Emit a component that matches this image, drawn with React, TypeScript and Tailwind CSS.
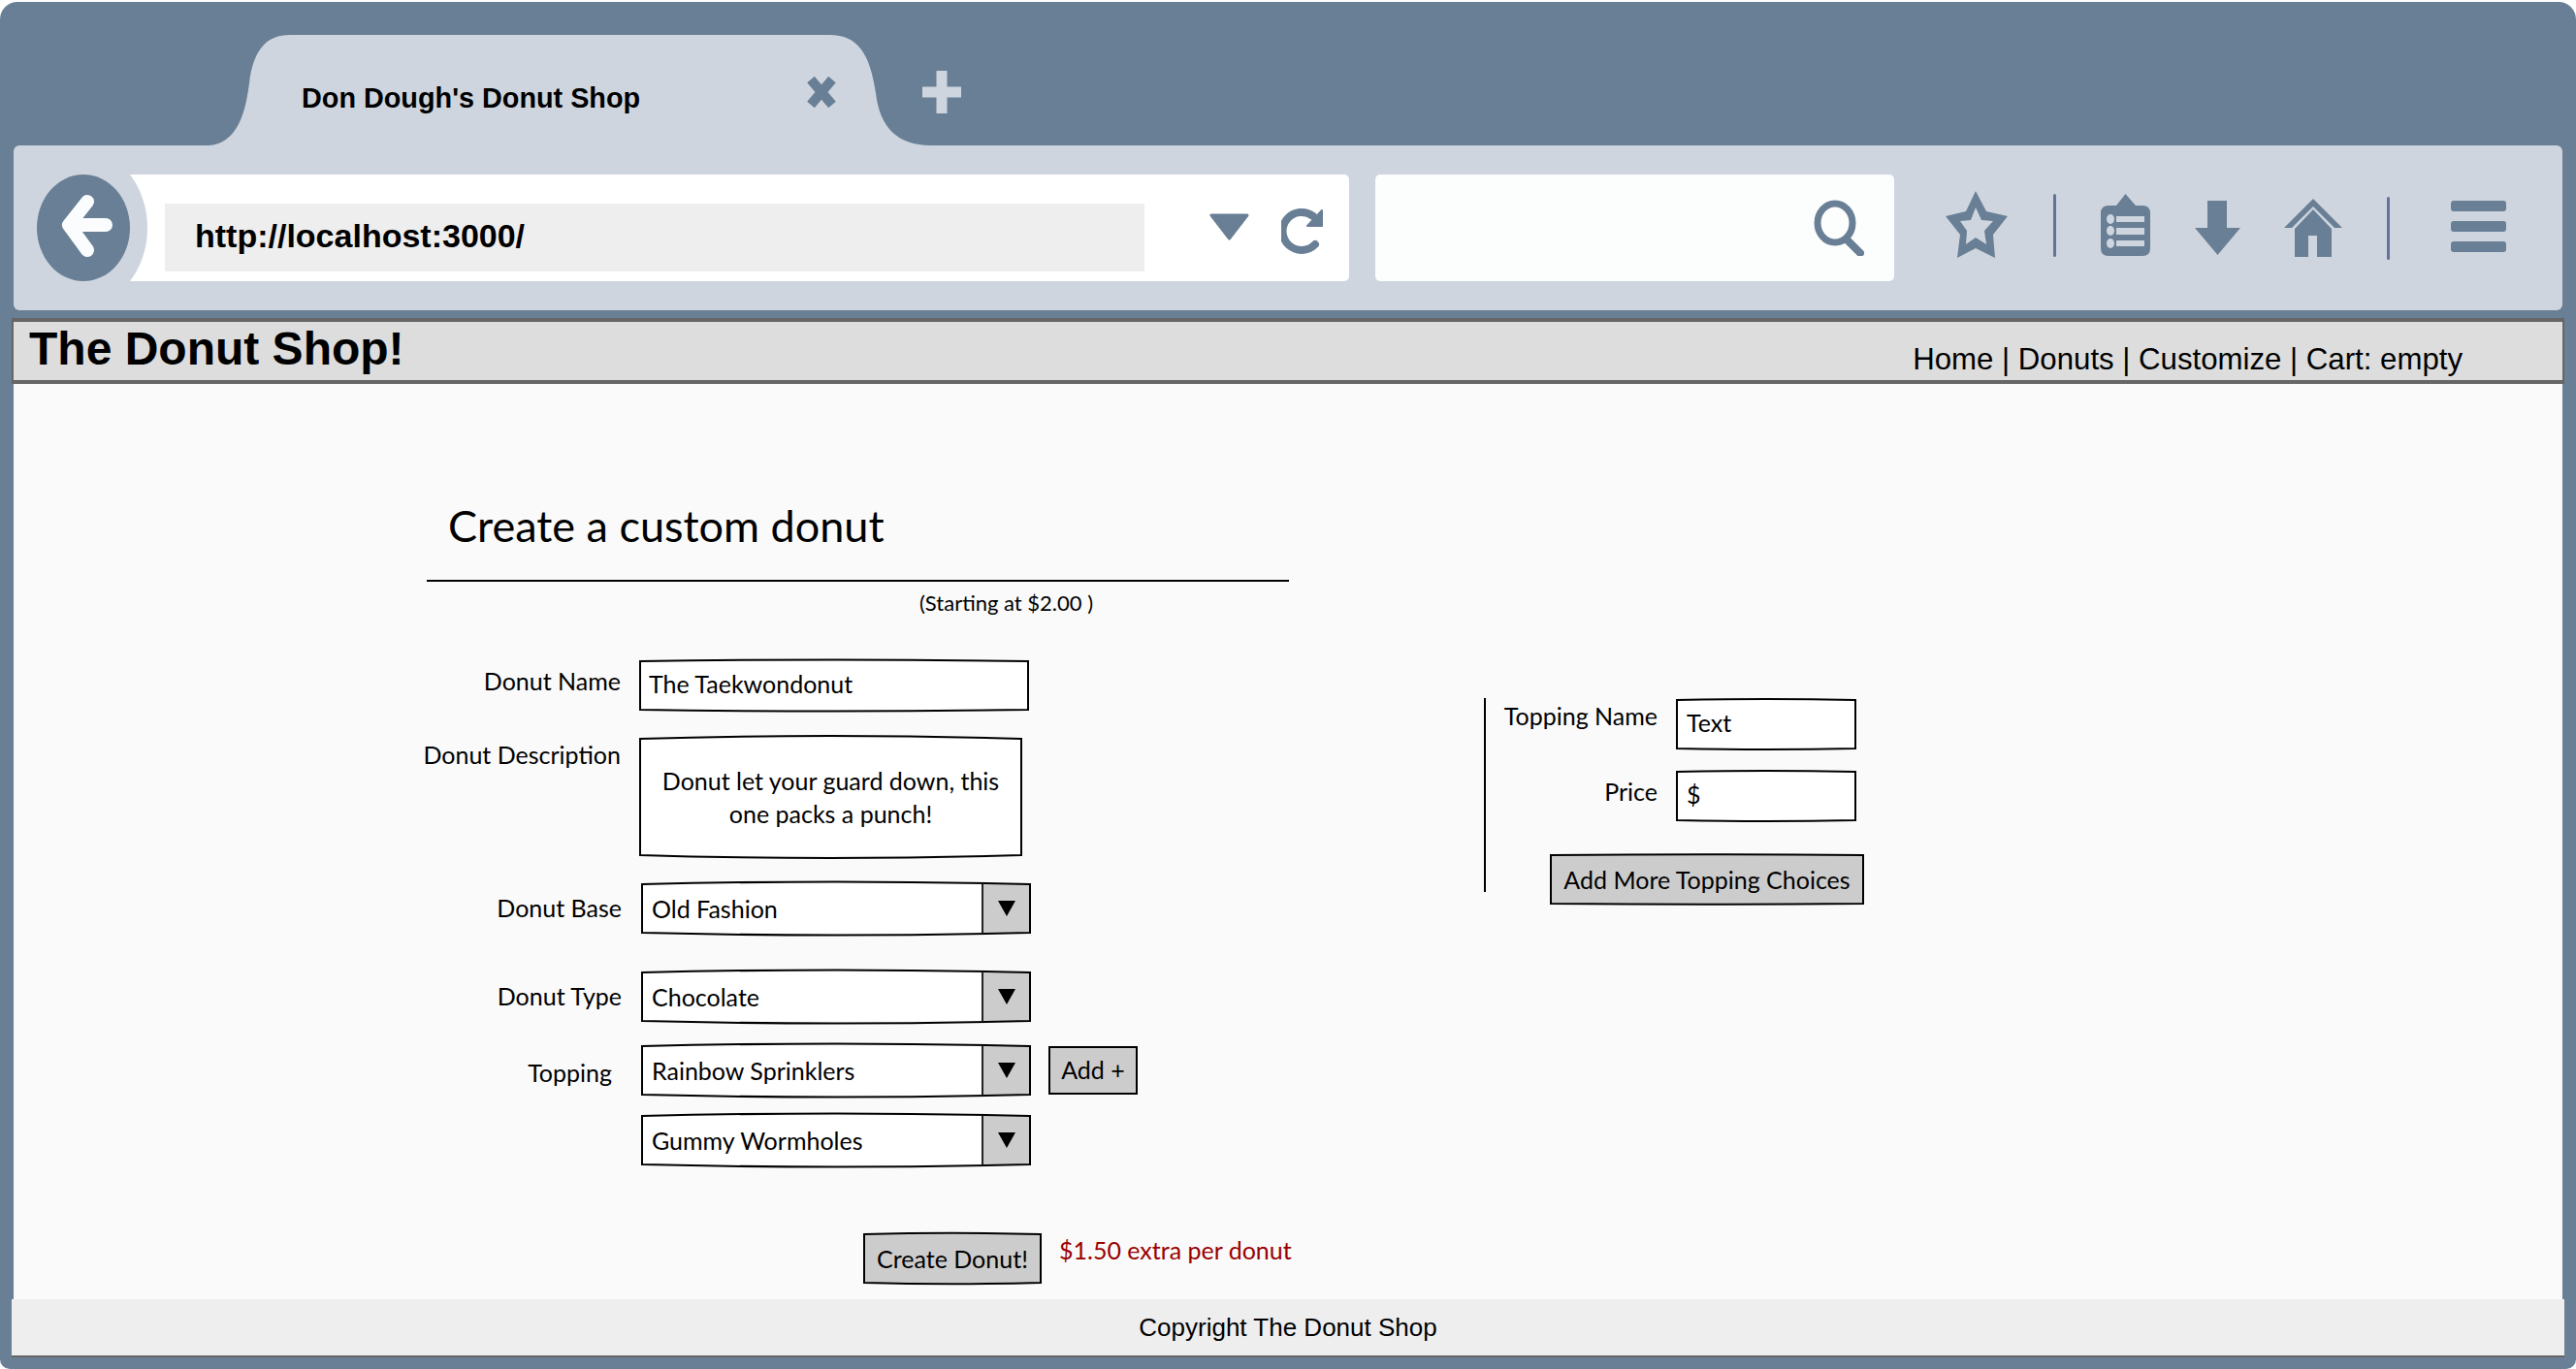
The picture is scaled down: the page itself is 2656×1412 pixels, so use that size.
import type { ReactNode } from "react";

const sketchFont = "font-['Comic_Sans_MS','Lato','Noto_Sans',sans-serif]";

// hand drawn outline of the wireframe widgets, top and bottom edges bow out a little
function Sketch({ className, bow = 8, children }: { className: string; bow?: number; children?: ReactNode }) {
  return (
    <div className={`relative ${className}`}>
      {children}
      <svg
        className="absolute inset-0 w-full h-full overflow-visible pointer-events-none"
        viewBox="0 0 100 100"
        preserveAspectRatio="none"
      >
        <path
          d={`M0 0 Q50 ${-bow} 100 0 L100 100 Q50 ${100 + bow} 0 100 Z`}
          fill="none"
          stroke="#000"
          strokeWidth="2"
          vectorEffect="non-scaling-stroke"
        />
      </svg>
    </div>
  );
}

function Select({ value }: { value: string }) {
  return (
    <Sketch className="w-[400px] h-[50px] bg-white" bow={10}>
      <div className="flex h-full">
        <span className="flex-1 pl-[10px] leading-[50px]">{value}</span>
        <div className="w-[50px] bg-[#ccc] border-l-2 border-[#222] flex items-center justify-center">
          <svg width="20" height="16" viewBox="0 0 20 16">
            <path d="M1 0H19L10 16Z" fill="#000" />
          </svg>
        </div>
      </div>
    </Sketch>
  );
}

function Toolbar() {
  return (
    <div className="mx-[14px] h-[170px] rounded-[6px] bg-[#ced5de] flex items-center">
      <svg width="120" height="110" viewBox="0 0 120 110" className="shrink-0 ml-[18px] -mr-[18px] z-10">
        <ellipse cx="54" cy="55" rx="66" ry="80" fill="#ced5de" />
        <ellipse cx="54" cy="55" rx="48" ry="55" fill="#697f95" />
        <path d="M58 28 L39 52 L58 78 M39 52 H77" fill="none" stroke="#fbfcfd" strokeWidth="14" strokeLinejoin="round" strokeLinecap="round" />
      </svg>
      <div className="w-[1257px] h-[110px] rounded-r-[5px] bg-white flex items-center">
        <div className="ml-[36px] mt-[20px] w-[1010px] h-[70px] bg-[#eee] pl-[31px] pb-[4px] flex items-center font-['Liberation_Sans',sans-serif] font-bold text-[34px] text-black">
          http://localhost:3000/
        </div>
        <svg width="41" height="28" viewBox="0 0 41 28" className="ml-[67px] -mt-[3px]">
          <path d="M2 2H39L20.5 26Z" fill="#697f95" stroke="#697f95" strokeWidth="3" strokeLinejoin="round" />
        </svg>
        <svg width="44" height="48" viewBox="0 0 44 48" className="ml-[33px] mt-[6px]">
          <path d="M35 38 A19.5 19.5 0 1 1 33 9" fill="none" stroke="#697f95" strokeWidth="8" strokeLinecap="round" />
          <path d="M42 3 V19 H27Z" fill="#697f95" stroke="#697f95" strokeWidth="2" strokeLinejoin="round" />
        </svg>
      </div>
      <div className="ml-[27px] w-[535px] h-[110px] rounded-[5px] bg-[#fcfdfd] flex items-center justify-end pr-[31px]">
        <svg width="52" height="58" viewBox="0 0 52 58">
          <ellipse cx="22" cy="24" rx="18" ry="20" fill="none" stroke="#697f95" strokeWidth="7" />
          <path d="M34 41 L48 55" stroke="#697f95" strokeWidth="8" strokeLinecap="round" />
        </svg>
      </div>
      <svg width="66" height="70" viewBox="0 0 66 70" className="ml-[52px] mb-[6px]">
        <path
          fillRule="evenodd"
          d="M32 0 L43 21 L65 26 L50 45 L52 69 L32 59 L13 69 L16 45 L1 26 L22 21Z M32 17 L27 30 L16 31 L23 41 L22 55 L32 48 L43 55 L41 41 L50 31 L38 30Z"
          fill="#697f95"
        />
      </svg>
      <div className="ml-[46px] mb-[6px] w-[3px] h-[65px] rounded-full bg-[#65739a]" />
      <svg width="51" height="64" viewBox="0 0 51 64" className="ml-[46px] mb-[6px]">
        <path d="M25.5 0 L36 12 H43 Q51 12 51 20 V56 Q51 64 43 64 H8 Q0 64 0 56 V20 Q0 12 8 12 H16Z" fill="#697f95" />
        <g fill="#ced5de">
          <ellipse cx="10" cy="26" rx="4" ry="5" />
          <ellipse cx="10" cy="38" rx="4" ry="5" />
          <ellipse cx="10" cy="51" rx="4" ry="5" />
          <rect x="16" y="23" width="29" height="6" />
          <rect x="16" y="35" width="29" height="7" />
          <rect x="16" y="48" width="29" height="6" />
        </g>
      </svg>
      <svg width="47" height="56" viewBox="0 0 47 56" className="ml-[46px]">
        <path d="M13 0H33V28H47L23.5 56L0 28H13Z" fill="#697f95" />
      </svg>
      <svg width="60" height="60" viewBox="0 0 60 60" className="ml-[45px]">
        <path d="M0 30 L30 0 L60 30 H52 L30 8 L8 30Z" fill="#697f95" />
        <path d="M30 11 L49 31 V60 H34 V38 H25 V60 H11 V31Z" fill="#697f95" />
      </svg>
      <div className="ml-[46px] w-[3px] h-[65px] rounded-full bg-[#65739a]" />
      <div className="ml-[63px] mb-[3px] w-[57px] flex flex-col gap-[10px]">
        <div className="h-[11px] rounded-[3px] bg-[#697f95]" />
        <div className="h-[11px] rounded-[3px] bg-[#697f95]" />
        <div className="h-[11px] rounded-[3px] bg-[#697f95]" />
      </div>
    </div>
  );
}

function TabStrip() {
  return (
    <div className="h-[148px] flex items-end pl-[205px]">
      <div className="relative w-[755px] h-[114px] shrink-0">
        <svg width="755" height="114" viewBox="0 0 755 114" className="absolute inset-0">
          <path
            d="M0 114 H10 C40 112 48 80 52 50 C56 15 70 0 94 0 H650 C680 0 692 20 698 60 C702 95 720 114 755 114Z"
            fill="#ced5de"
          />
        </svg>
        <div className="relative h-full flex items-center pl-[106px]">
          <span className="pt-[18px] font-['Liberation_Sans',sans-serif] font-bold text-[28.8px] text-black">
            Don Dough's Donut Shop
          </span>
          <svg width="32" height="32" viewBox="0 0 32 32" className="ml-[171px] mt-[4px]">
            <path d="M5 3 L27 29 M27 3 L5 29" stroke="#697f95" strokeWidth="10" />
          </svg>
        </div>
      </div>
      <svg width="40" height="44" viewBox="0 0 40 44" className="-ml-[9px] mb-[33px]">
        <path d="M20 0 V44 M0 22 H40" stroke="#ced5de" strokeWidth="11" />
      </svg>
    </div>
  );
}

export default function App() {
  return (
    <div className="w-[2656px] h-[1412px] bg-white pt-[2px]">
      <div className="h-full rounded-t-[18px] rounded-b-[10px] bg-[#697f95] flex flex-col overflow-hidden">
        <TabStrip />
        <Toolbar />

        <header className="mt-[8px] mx-[12px] h-[68px] bg-[#ddd] border-y-4 border-x-2 border-[#666] flex justify-between font-['Liberation_Sans',sans-serif] text-black">
          <h1 className="pl-[16px] font-bold text-[48px] leading-[56px]">The Donut Shop!</h1>
          <nav className="pr-[103px] pt-[19px] text-[31.2px] leading-[40px]">Home | Donuts | Customize | Cart: empty</nav>
        </header>

        <main className={`mx-[14px] h-[944px] bg-[#fafafa] flex items-start pl-[426px] text-[25px] text-black ${sketchFont}`}>
          <div className="w-[900px] shrink-0">
            <h2 className="mt-[116px] ml-[22px] text-[45px] leading-[60px]">Create a custom donut</h2>
            <div className="mt-[26px] h-[2px] w-[889px] bg-black" />
            <p className="mt-[10px] ml-[508px] text-[22px] leading-[24px]">(Starting at $2.00 )</p>

            <div className="mt-[48px] flex items-center">
              <label className="w-[200px] text-right -mt-[8px]">Donut Name</label>
              <Sketch className="ml-[20px] w-[400px] h-[50px] bg-white pl-[9px] leading-[47px]" bow={6}>
                The Taekwondonut
              </Sketch>
            </div>

            <div className="mt-[30px] flex items-start">
              <label className="w-[200px] flex justify-end whitespace-nowrap leading-[32px]">Donut Description</label>
              <Sketch className="ml-[20px] w-[393px] h-[120px] bg-white" bow={5}>
                <div className="h-full flex items-center justify-center text-center leading-[34px]">
                  <p>
                    Donut let your guard down, this
                    <br />
                    one packs a punch!
                  </p>
                </div>
              </Sketch>
            </div>

            <div className="mt-[30px] flex items-center">
              <label className="w-[201px] text-right">Donut Base</label>
              <div className="ml-[21px]">
                <Select value="Old Fashion" />
              </div>
            </div>

            <div className="mt-[41px] flex items-center">
              <label className="w-[201px] text-right">Donut Type</label>
              <div className="ml-[21px]">
                <Select value="Chocolate" />
              </div>
            </div>

            <div className="mt-[26px] flex items-center">
              <label className="w-[191px] text-right mt-[6px]">Topping</label>
              <div className="ml-[31px]">
                <Select value="Rainbow Sprinklers" />
              </div>
              <button className="ml-[19px] w-[92px] h-[50px] bg-[#ccc] border-2 border-black">Add +</button>
            </div>

            <div className="mt-[22px] ml-[222px]">
              <Select value="Gummy Wormholes" />
            </div>

            <div className="mt-[70px] ml-[451px] flex items-start">
              <Sketch className="mt-[2px] w-[182px] h-[50px] bg-[#ccc] text-center leading-[50px]" bow={5}>
                Create Donut!
              </Sketch>
              <span className="ml-[19px] text-[#990000] leading-[36px] whitespace-nowrap">$1.50 extra per donut</span>
            </div>
          </div>

          <div className="mt-[324px] ml-[190px] flex items-start">
            <div className="w-[2px] h-[200px] bg-black" />
            <div className="pt-[2px]">
              <div className="flex items-start">
                <label className="w-[177px] text-right leading-[32px]">Topping Name</label>
                <Sketch className="ml-[20px] w-[184px] h-[50px] bg-white pl-[10px] leading-[47px]" bow={4}>
                  Text
                </Sketch>
              </div>
              <div className="mt-[24px] flex items-center">
                <label className="w-[177px] text-right -mt-[8px]">Price</label>
                <Sketch className="ml-[20px] w-[184px] h-[50px] bg-white pl-[10px] leading-[47px]" bow={4}>
                  $
                </Sketch>
              </div>
              <Sketch className="mt-[36px] ml-[67px] w-[322px] h-[50px] bg-[#ccc] text-center leading-[50px]" bow={3}>
                Add More Topping Choices
              </Sketch>
            </div>
          </div>
        </main>

        <footer className="mx-[12px] h-[60px] bg-[#eee] border-b-2 border-[#666] flex items-center justify-center font-['Liberation_Sans',sans-serif] text-[26px] text-black">
          Copyright The Donut Shop
        </footer>
      </div>
    </div>
  );
}
